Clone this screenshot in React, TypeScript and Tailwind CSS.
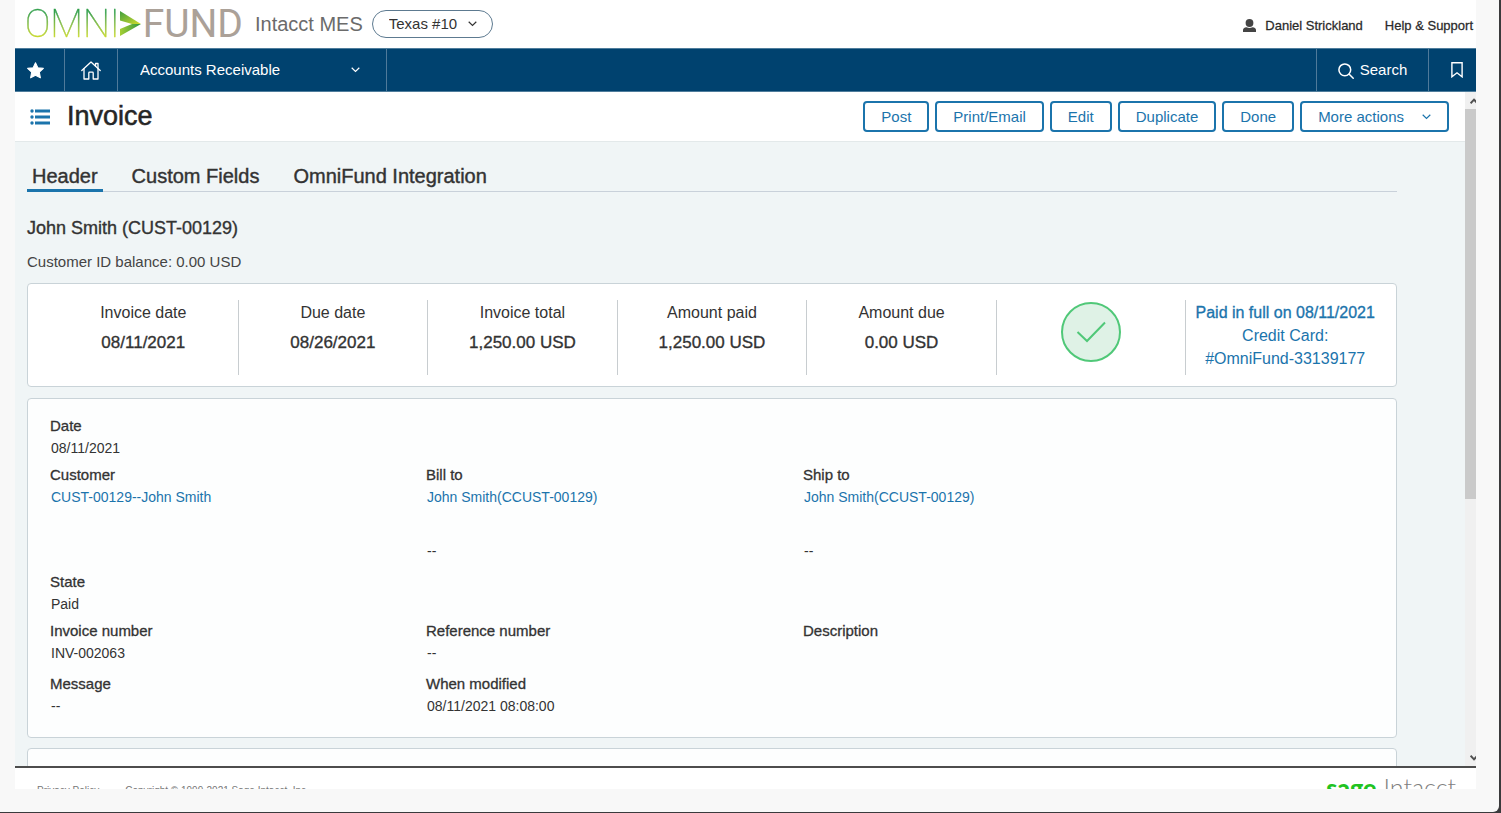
import React from "react";

const medium = "[-webkit-text-stroke:0.02em_currentColor]";

function Chevron({ className = "" }: { className?: string }) {
  return (
    <svg className={className} width="9" height="6" viewBox="0 0 9 6" fill="none" stroke="currentColor" strokeWidth="1.2" aria-hidden="true">
      <path d="M0.7 0.8 4.5 4.4 8.3 0.8" />
    </svg>
  );
}

function Logo() {
  return (
    <div className="flex h-[46px] items-center font-['Roboto',sans-serif] leading-[46px]" aria-label="OmniFund">
      <span className="bg-linear-to-b from-[#2f9e49] from-25% to-[#cddc29] to-80% bg-clip-text text-[38px] font-thin text-transparent [-webkit-text-stroke:0.012em_transparent]">
        OMNI
      </span>
      <svg className="mr-[2px]" width="21" height="26" viewBox="0 0 21 26" aria-hidden="true">
        <defs>
          <linearGradient id="arrowTop" x1="0" y1="0" x2="1" y2="1">
            <stop offset="0" stopColor="#3f9e3f" />
            <stop offset="1" stopColor="#d3dd2b" />
          </linearGradient>
          <linearGradient id="arrowLow" x1="0" y1="0" x2="1" y2="0">
            <stop offset="0" stopColor="#a5cf34" />
            <stop offset="1" stopColor="#2f9440" />
          </linearGradient>
        </defs>
        <path d="M0 0 21 13H12L0 9.500Z" fill="url(#arrowTop)" />
        <path d="M21 13 0 25V18L12 13Z" fill="url(#arrowLow)" />
      </svg>
      <span className="text-[39px] text-[#aba198]">FUND</span>
    </div>
  );
}

function TopBar() {
  return (
    <header className="flex h-12 shrink-0 items-center justify-between bg-white pr-[3px] pl-[10px]">
      <div className="flex items-center">
        <Logo />
        <span className="ml-3 text-xl leading-[46px] text-[#6b6b6b]">Intacct MES</span>
        <div className="relative ml-[9px] flex items-center">
          <select
            aria-label="Entity"
            className="h-7 w-[121px] appearance-none rounded-full border border-[#5d7a90] bg-white pl-4 text-[15px] text-[#333]"
          >
            <option>Texas #10</option>
          </select>
          <Chevron className="pointer-events-none absolute right-4 text-[#333]" />
        </div>
      </div>
      <div className={"flex items-center gap-[22px] pt-[3px] text-[13px] text-[#2b2b2b] " + medium}>
        <a href="#profile" className="flex items-center gap-[9px]">
          <svg width="13" height="13" viewBox="0 0 13 13" fill="#444" aria-hidden="true">
            <ellipse cx="6.500" cy="4" rx="3.900" ry="4" />
            <path d="M0 13V11Q0 8.600 3.500 8.200Q6.500 9.800 9.500 8.200Q13 8.600 13 11V13Z" />
          </svg>
          Daniel Strickland
        </a>
        <a href="#help">Help &amp; Support</a>
      </div>
    </header>
  );
}

function NavBar() {
  return (
    <nav className="flex h-11 shrink-0 items-stretch border-y border-[#4f7d9c] bg-[#00426f] text-[15px] text-white">
      <button aria-label="Favorites" className="flex w-[50px] items-center justify-center border-r border-[#4f7a9a] pr-2">
        <svg width="17" height="17" viewBox="0 0 16 16" fill="#fff" stroke="#fff" strokeLinejoin="round" aria-hidden="true">
          <path d="M8 .7 10.200 5.400 15.400 6 11.600 9.600 12.600 14.900 8 12.400 3.400 14.900 4.400 9.600 .6 6 5.800 5.400Z" />
        </svg>
      </button>
      <button aria-label="Home" className="flex w-[53px] items-center justify-center border-r border-[#4f7a9a]">
        <svg width="20" height="19" viewBox="0 0 20 19" fill="none" stroke="#fff" strokeWidth="1.300" strokeLinejoin="round" strokeLinecap="round" aria-hidden="true">
          <path d="M.8 9.500 10 1 19.200 9.500" />
          <path d="M3 7.700V18H7.800V12Q7.800 11.200 8.600 11.200H11.400Q12.200 11.200 12.200 12V18H17V7.700" />
          <path d="M14.500 5V2.500H17V7.300" />
        </svg>
      </button>
      <div className="relative flex w-[269px] items-center border-r border-[#4f7a9a]">
        <select aria-label="Application" className="h-full w-full appearance-none bg-[#00426f] pt-px pl-[22px] text-white">
          <option>Accounts Receivable</option>
        </select>
        <Chevron className="pointer-events-none absolute right-[26px]" />
      </div>
      <button className="ml-auto flex w-[113px] items-center justify-center gap-[6px] border-x border-[#4f7a9a] pt-px">
        <svg width="16" height="16" viewBox="0 0 16 16" fill="none" stroke="#fff" strokeWidth="1.500" strokeLinecap="round" aria-hidden="true">
          <circle cx="6.800" cy="6.800" r="5.900" />
          <path d="M11.200 11.200 15.200 15.200" />
        </svg>
        Search
      </button>
      <button aria-label="Bookmarks" className="flex w-[47px] items-center justify-center pl-2">
        <svg width="12" height="16" viewBox="0 0 12 16" fill="none" stroke="#fff" strokeWidth="1.400" aria-hidden="true">
          <path d="M.9 .8H11.100V14.800L6 10.800 .9 14.800Z" />
        </svg>
      </button>
    </nav>
  );
}

const actions = ["Post", "Print/Email", "Edit", "Duplicate", "Done"];
const actionClass = "flex h-[31px] items-center rounded border-2 border-[#1b74ac] bg-white px-4 pt-px text-[15px] text-[#1b74ac]";

function TitleBar() {
  return (
    <div className="flex h-[50px] items-center justify-between border-b border-[#e3e9ea] bg-white pr-4 pl-[15px]">
      <div className="flex items-center gap-[17px]">
        <svg width="20" height="16" viewBox="0 0 20 16" fill="#1b74ac" aria-hidden="true">
          <circle cx="2" cy="2" r="1.700" />
          <circle cx="2" cy="8" r="1.700" />
          <circle cx="2" cy="14" r="1.700" />
          <path d="M5 .6H20V3.400H5ZM5 6.600H20V9.400H5ZM5 12.600H20V15.400H5Z" />
        </svg>
        <h1 className={"text-[27px] text-[#262626] " + medium}>Invoice</h1>
      </div>
      <div className="flex gap-[6px]">
        {actions.map((a) => (
          <button key={a} className={actionClass}>
            {a}
          </button>
        ))}
        <button className={actionClass}>
          More actions
          <Chevron className="ml-[18px]" />
        </button>
      </div>
    </div>
  );
}

const tabClass = "-mb-px h-[34px] border-b-[3px] px-[5px] pt-1 leading-[26px]";

function Tabs() {
  return (
    <div role="tablist" className={"flex h-[50px] items-end gap-6 border-b border-[#c9d1da] text-xl text-[#333] " + medium}>
      <button role="tab" aria-selected="true" className={tabClass + " border-[#1b74ac]"}>
        Header
      </button>
      <button role="tab" aria-selected="false" className={tabClass + " border-transparent"}>
        Custom Fields
      </button>
      <button role="tab" aria-selected="false" className={tabClass + " border-transparent"}>
        OmniFund Integration
      </button>
    </div>
  );
}

const stats = [
  ["Invoice date", "08/11/2021"],
  ["Due date", "08/26/2021"],
  ["Invoice total", "1,250.00 USD"],
  ["Amount paid", "1,250.00 USD"],
  ["Amount due", "0.00 USD"],
];

function Summary() {
  return (
    <section className="mt-[10px] grid h-[104px] grid-cols-[repeat(6,minmax(0,189fr))_minmax(0,197fr)] rounded border border-[#c9d3d8] bg-white py-4 pr-3 pl-[21px] text-center text-base text-[#333]">
      {stats.map(([label, value]) => (
        <div key={label} className="mb-[-5px] h-[75px] border-r border-[#c8cdd0]">
          <div className="leading-[26px]">{label}</div>
          <div className={"pt-1 text-[17px] leading-[26px] " + medium}>{value}</div>
        </div>
      ))}
      <div className="flex h-[75px] justify-center border-r border-[#c8cdd0] pt-px">
        <svg width="62" height="62" viewBox="0 0 62 62" fill="none" stroke="#50c878" aria-label="Paid">
          <circle cx="31" cy="31" r="29" fill="#dff2e6" strokeWidth="2" />
          <path d="M17.500 31 27 40 45 21.500" strokeWidth="2" />
        </svg>
      </div>
      <div className="pt-px leading-[23px] text-[#1b74ac]">
        <div className={medium}>Paid in full on 08/11/2021</div>
        <div>Credit Card:</div>
        <a href="#payment">#OmniFund-33139177</a>
      </div>
    </section>
  );
}

function Field({ label, value, href }: { label: string; value?: string; href?: string }) {
  return (
    <div>
      <dt className={"text-[15px] leading-[22px] " + medium}>{label}</dt>
      <dd className="h-[22px] pl-px text-sm leading-[22px]">
        {href ? (
          <a href={href} className="text-[#1b74ac]">
            {value}
          </a>
        ) : (
          value
        )}
      </dd>
    </div>
  );
}

function Row({ children }: { children: React.ReactNode }) {
  return <dl className="grid grid-cols-[376fr_377fr_593fr]">{children}</dl>;
}

function Details() {
  return (
    <section className="mt-[11px] flex h-[340px] flex-col gap-[5px] rounded border border-[#c9d3d8] bg-[#fdfefe] pt-4 pl-[22px] text-[#333]">
      <Row>
        <Field label="Date" value="08/11/2021" />
      </Row>
      <div>
        <Row>
          <Field label="Customer" value="CUST-00129--John Smith" href="#customer" />
          <Field label="Bill to" value="John Smith(CCUST-00129)" href="#bill-to" />
          <Field label="Ship to" value="John Smith(CCUST-00129)" href="#ship-to" />
        </Row>
        <div className="grid grid-cols-[376fr_377fr_593fr] pt-8 pb-1 text-sm leading-[22px]">
          <span />
          <span className="pl-px">--</span>
          <span className="pl-px">--</span>
        </div>
      </div>
      <Row>
        <Field label="State" value="Paid" />
      </Row>
      <Row>
        <Field label="Invoice number" value="INV-002063" />
        <Field label="Reference number" value="--" />
        <Field label="Description" />
      </Row>
      <div className="pt-1">
        <Row>
          <Field label="Message" value="--" />
          <Field label="When modified" value="08/11/2021 08:08:00" />
        </Row>
      </div>
    </section>
  );
}

function ScrollRail() {
  return (
    <div className="flex w-[11px] shrink-0 flex-col overflow-hidden bg-[#f0f0f0]" aria-hidden="true">
      <div className="flex h-[17px] w-[17px] items-center justify-center">
        <svg width="8" height="6" viewBox="0 0 8 6" fill="none" stroke="#505050" strokeWidth="2">
          <path d="M.6 5.200 4 1.600 7.400 5.200" />
        </svg>
      </div>
      <div className="flex flex-1 flex-col">
        <div className="basis-[61%] bg-[#cacaca]" />
      </div>
      <div className="flex h-[17px] w-[17px] items-center justify-center">
        <svg width="8" height="6" viewBox="0 0 8 6" fill="none" stroke="#505050" strokeWidth="2">
          <path d="M.6 .8 4 4.400 7.400 .8" />
        </svg>
      </div>
    </div>
  );
}

function Footer() {
  return (
    <footer className="flex h-[23px] shrink-0 items-start justify-between overflow-hidden border-t-2 border-[#4d4d4d] bg-white pr-5 pl-[22px]">
      <div className="flex gap-[26px] pt-[15px] text-[10px] leading-[15px] text-[#777]">
        <a href="#privacy">Privacy Policy</a>
        <span>Copyright © 1999-2021 Sage Intacct, Inc.</span>
      </div>
      <div className="flex items-baseline gap-[7px] pt-[3px] font-['Lato',sans-serif] text-[25px] leading-8">
        <span className="font-black text-[#21c321]">sage</span>
        <span className="font-light text-[#808080]">Intacct</span>
      </div>
    </footer>
  );
}

export default function App() {
  return (
    <div className="h-screen bg-[#3a3a3c] pr-[2px] pb-px font-['Liberation_Sans',Arial,sans-serif]">
      <div className="h-full rounded-br-md bg-[#f8f8f8] pr-[23px] pb-[23px] pl-[15px]">
        <div className="flex h-full flex-col overflow-hidden">
          <TopBar />
          <NavBar />
          <div className="flex min-h-0 flex-1">
            <main className="min-w-0 flex-1 overflow-hidden bg-[#f0f5f6]">
              <TitleBar />
              <div className="pr-[68px] pl-3">
                <Tabs />
                <h2 className={"mt-6 text-lg leading-6 text-[#333] " + medium}>John Smith (CUST-00129)</h2>
                <p className="mt-[11px] text-[15px] leading-[22px] text-[#444]">Customer ID balance: 0.00 USD</p>
                <Summary />
                <Details />
                <section className="mt-[10px] h-24 rounded border border-[#c9d3d8] bg-[#fdfefe]" />
              </div>
            </main>
            <ScrollRail />
          </div>
          <Footer />
        </div>
      </div>
    </div>
  );
}
